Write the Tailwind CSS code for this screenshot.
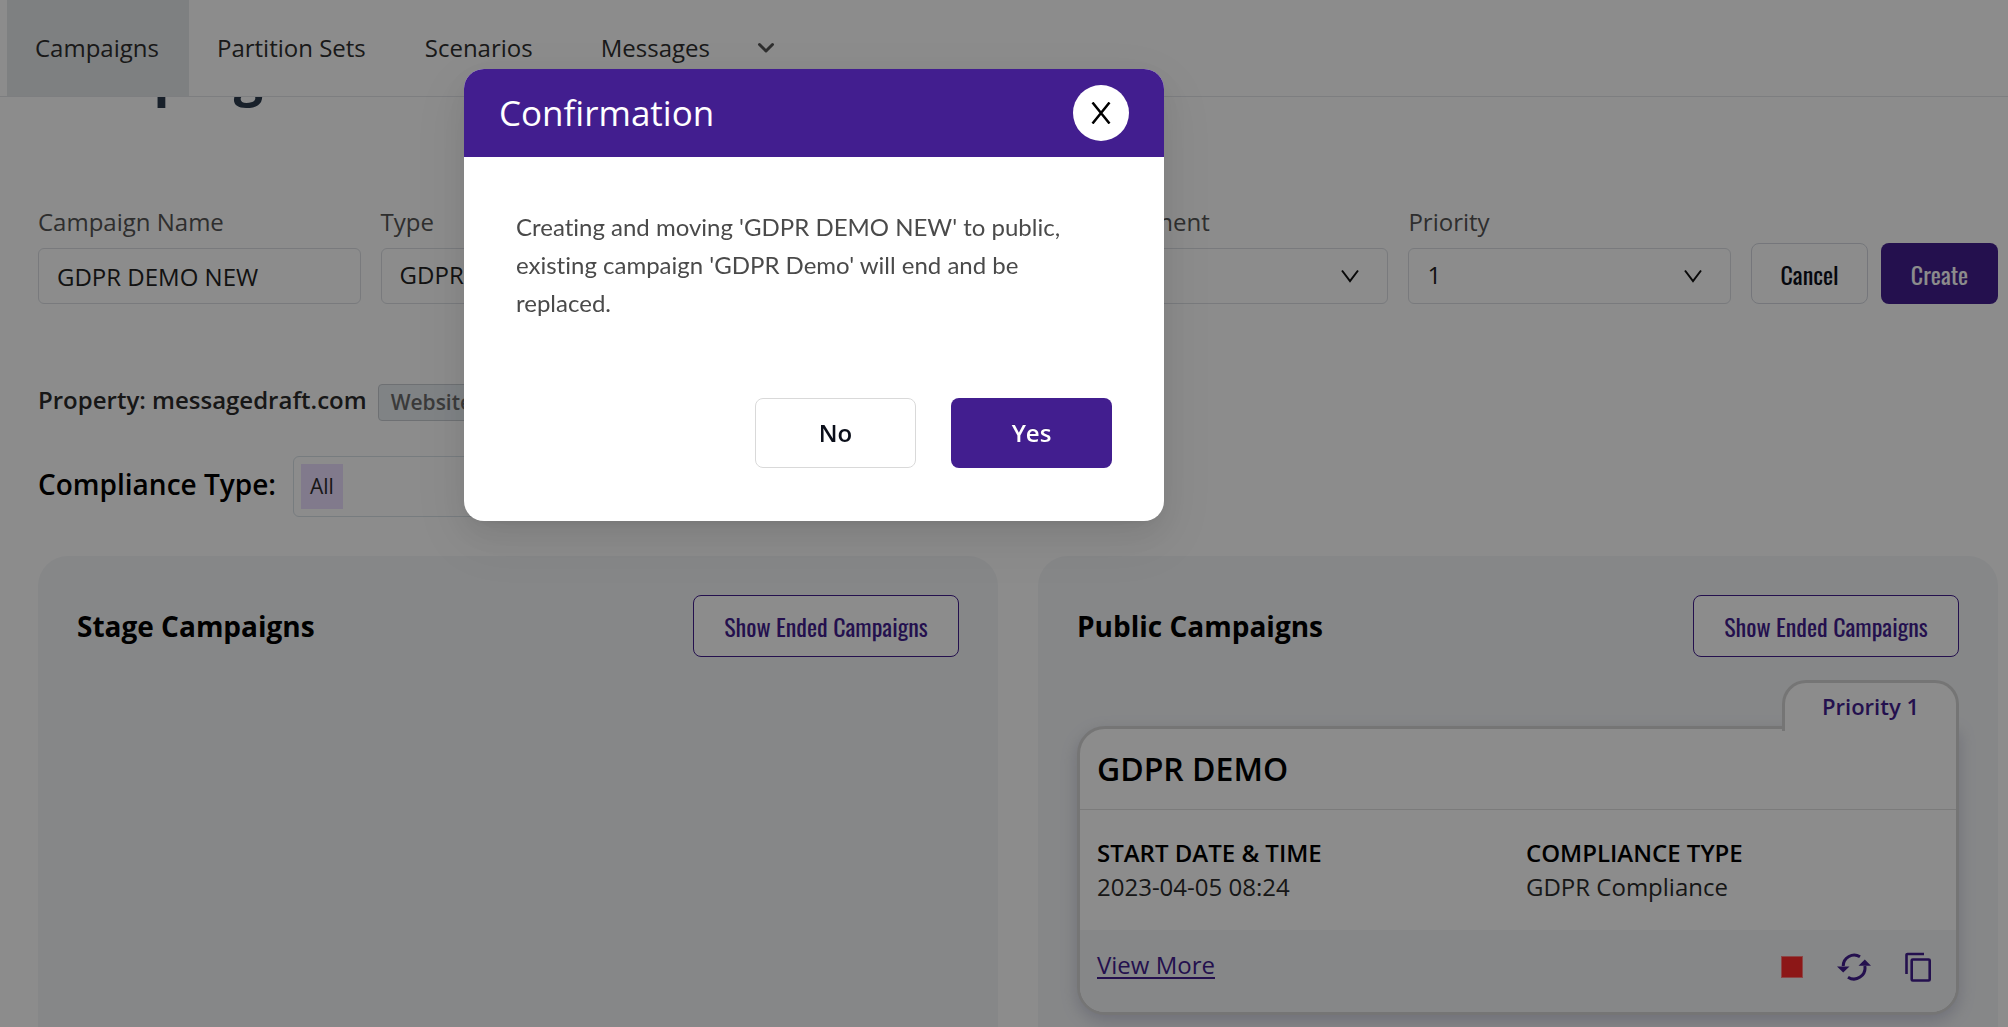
<!DOCTYPE html>
<html lang="en">
<head>
  <meta charset="UTF-8" />
  <meta name="viewport" content="width=device-width, initial-scale=1.0">
  <title>Campaigns</title>
  <script src="https://cdn.jsdelivr.net/npm/@tailwindcss/browser@4"></script>
</head>
<body class="h-screen overflow-hidden bg-white font-['Open_Sans',sans-serif] text-2xl text-black/90">

  <!-- Navigation -->
  <header class="relative z-10 bg-white border-b border-[#e4e6ea]">
    <nav class="flex h-24 pl-[7px] text-[#2f2f2f]">
      <a href="#campaigns" class="flex items-center pl-7 pr-[30px] bg-[#e6e9eb]">Campaigns</a>
      <a href="#partition-sets" class="flex items-center pl-7 pr-[30px]">Partition Sets</a>
      <a href="#scenarios" class="flex items-center pl-[29px] pr-[30px]">Scenarios</a>
      <button type="button" class="flex items-center gap-[46px] px-[38px]">
        Messages
        <svg class="w-5 h-5" viewBox="0 0 20 20" fill="none" stroke="#555" stroke-width="3" stroke-linecap="round" stroke-linejoin="round"><path d="M3.500 6.500 10 13l6.500-6.500" /></svg>
      </button>
    </nav>
  </header>

  <main class="pl-[38px] pr-[10px]">
    <h1 class="-mt-[52px] text-[52px] leading-[60px] font-bold text-[#2c3b4e]">Campaigns</h1>

    <!-- Campaign form -->
    <form class="flex items-end gap-5 mt-[101px]">
      <div class="grid grid-cols-5 gap-5 flex-1 text-[#555]">
        <div>
          <label for="name" class="block leading-8 mb-[10px]">Campaign Name</label>
          <input type="text" id="name" value="GDPR DEMO NEW" class="w-full h-14 px-[18px] border border-[#dcdfe4] rounded-md text-[#222]" />
        </div>
        <div>
          <label for="type" class="block leading-8 mb-[10px]">Type</label>
          <div class="relative">
            <select id="type" class="appearance-none w-full h-14 px-[18px] pb-[3px] border border-[#dcdfe4] rounded-md text-[#222]">
              <option>GDPR</option>
            </select>
            <svg class="absolute right-7 top-[18px] w-5 h-5 pointer-events-none" viewBox="0 0 20 20" fill="none" stroke="#111" stroke-width="2"><path d="M2 4.500 10 15l8-10.500" /></svg>
          </div>
        </div>
        <div>
          <label for="message" class="block leading-8 mb-[10px]">Message</label>
          <div class="relative">
            <select id="message" class="appearance-none w-full h-14 px-[18px] pb-[3px] border border-[#dcdfe4] rounded-md text-[#222]">
              <option>GDPR</option>
            </select>
            <svg class="absolute right-7 top-[18px] w-5 h-5 pointer-events-none" viewBox="0 0 20 20" fill="none" stroke="#111" stroke-width="2"><path d="M2 4.500 10 15l8-10.500" /></svg>
          </div>
        </div>
        <div>
          <label for="environment" class="block leading-8 mb-[10px]">Environment</label>
          <div class="relative">
            <select id="environment" class="appearance-none w-full h-14 px-[18px] pb-[3px] border border-[#dcdfe4] rounded-md text-[#222]">
              <option>Public</option>
            </select>
            <svg class="absolute right-7 top-[18px] w-5 h-5 pointer-events-none" viewBox="0 0 20 20" fill="none" stroke="#111" stroke-width="2"><path d="M2 4.500 10 15l8-10.500" /></svg>
          </div>
        </div>
        <div>
          <label for="priority" class="block leading-8 mb-[10px]">Priority</label>
          <div class="relative">
            <select id="priority" class="appearance-none w-full h-14 px-[18px] pb-[3px] border border-[#dcdfe4] rounded-md text-[#222]">
              <option>1</option>
            </select>
            <svg class="absolute right-7 top-[18px] w-5 h-5 pointer-events-none" viewBox="0 0 20 20" fill="none" stroke="#111" stroke-width="2"><path d="M2 4.500 10 15l8-10.500" /></svg>
          </div>
        </div>
      </div>
      <div class="flex gap-[13px] font-['Oswald','Roboto_Condensed',sans-serif]">
        <button type="button" class="w-[117px] h-[61px] border border-[#d5d8e0] rounded-lg text-[#0b0f1a]">Cancel</button>
        <button type="submit" class="w-[117px] h-[61px] rounded-lg bg-[#421e8f] text-white">Create</button>
      </div>
    </form>

    <!-- Property and filter -->
    <div class="flex items-start gap-[11px] mt-20 font-semibold text-[#2b2b2b]">
      <span class="leading-8">Property: messagedraft.com</span>
      <span class="h-[37px] px-3 border border-[#c8cdd2] rounded-sm bg-[#e9eff3] text-[21px] leading-[35px] text-[#6b6b6b]">Website</span>
    </div>
    <div class="flex items-start gap-[17px] mt-[35px]">
      <span class="text-[28px] leading-14 font-semibold text-black">Compliance Type:</span>
      <div class="flex w-[500px] h-[61px] p-[7px] border border-[#d9e2e8] rounded-md">
        <span class="px-[9px] bg-[#ebdeff] text-[21px] leading-[45px] text-[#2b2b2b]">All</span>
      </div>
    </div>

    <!-- Campaign columns -->
    <div class="grid grid-cols-2 gap-10 mt-[39px]">
      <section class="min-h-[520px] p-[39px] rounded-[30px] bg-[#f4f6f8]">
        <div class="flex items-center justify-between">
          <h2 class="pt-[2px] text-[28px] font-bold text-black">Stage Campaigns</h2>
          <button type="button" class="w-[266px] h-[62px] border border-[#421e8f] rounded-lg bg-white text-[#421e8f] font-['Oswald','Roboto_Condensed',sans-serif]">Show Ended Campaigns</button>
        </div>
      </section>

      <section class="min-h-[520px] p-[39px] rounded-[30px] bg-[#f4f6f8]">
        <div class="flex items-center justify-between">
          <h2 class="pt-[2px] text-[28px] font-bold text-black">Public Campaigns</h2>
          <button type="button" class="w-[266px] h-[62px] border border-[#421e8f] rounded-lg bg-white text-[#421e8f] font-['Oswald','Roboto_Condensed',sans-serif]">Show Ended Campaigns</button>
        </div>

        <div class="mt-[23px]">
          <div class="relative z-[1] flex justify-center w-[177px] h-[51px] pt-[7px] -mb-[5px] ml-auto border-[3px] border-b-0 border-[#d6d6d6] rounded-t-3xl bg-white text-[22px] leading-8 font-semibold text-[#421e8f]">Priority 1</div>
          <article class="overflow-hidden border-[3px] border-[#d6d6d6] rounded-[28px] rounded-tr-none bg-white shadow-[0_6px_16px_rgba(80,80,130,0.25)]">
            <div class="flex items-center h-[81px] px-[17px] border-b border-[#e0e0e0]">
              <h3 class="text-[32px] font-semibold text-black">GDPR DEMO</h3>
            </div>
            <dl class="grid grid-cols-2 gap-4 px-[17px] py-[26px] leading-[34px]">
              <div>
                <dt class="font-semibold text-black">START DATE &amp; TIME</dt>
                <dd class="text-[#2b2b2b]">2023-04-05 08:24</dd>
              </div>
              <div>
                <dt class="font-semibold text-black">COMPLIANCE TYPE</dt>
                <dd class="text-[#2b2b2b]">GDPR Compliance</dd>
              </div>
            </dl>
            <div class="flex items-center justify-between px-[17px] pt-5 pb-8 bg-[#f4f6f8] text-[#421e8f]">
              <a href="#view-more" class="leading-[30px] underline decoration-2 underline-offset-3">View More</a>
              <div class="flex items-center gap-[34px] pt-[2px] pr-2 -mb-[2px]">
                <button type="button" aria-label="Stop" class="w-[22px] h-[22px] border border-[#ff8080] bg-[#ff2a2a]"></button>
                <button type="button" aria-label="Restart">
                  <svg class="w-[34px] h-[28px]" viewBox="0 0 34 28" fill="none" stroke="currentColor" stroke-width="3">
                    <path d="M23 3.800A11 11 0 0 0 6.200 13" />
                    <path d="M11 24.200A11 11 0 0 0 27.800 13" />
                    <path d="M0 13.500h12.500L6.200 19.500zM21.500 12.800H34L27.800 6.500z" fill="currentColor" stroke="none" />
                  </svg>
                </button>
                <button type="button" aria-label="Copy">
                  <svg class="w-[26px] h-[30px]" viewBox="0 0 26 30" fill="none" stroke="currentColor" stroke-width="2.600" stroke-linejoin="round">
                    <rect x="6.700" y="7.500" width="18" height="21" rx="1" />
                    <path d="M1.500 22V3a1 1 0 0 1 1-1h16.500" />
                  </svg>
                </button>
              </div>
            </div>
          </article>
        </div>
      </section>
    </div>
  </main>

  <!-- Confirmation modal -->
  <div class="fixed inset-0 z-20 flex items-start pt-[69px] bg-black/45">
    <div role="dialog" aria-modal="true" aria-labelledby="modalTitle" class="w-[700px] ml-[464px] overflow-hidden rounded-[20px] bg-white shadow-[0_6px_12px_-8px_rgba(0,0,0,0.12),0_12px_32px_rgba(0,0,0,0.08),0_18px_56px_16px_rgba(0,0,0,0.05)]">
      <div class="flex items-center justify-between h-[88px] px-[35px] bg-[#421e8f]">
        <h2 id="modalTitle" class="text-[35px] font-medium text-white">Confirmation</h2>
        <button type="button" aria-label="Close" class="flex items-center justify-center w-14 h-14 rounded-full bg-white">
          <svg class="w-[22px] h-[22px]" viewBox="0 0 22 22" fill="none" stroke="#000" stroke-width="2.500"><path d="M2.500.500l17 21M19.500.500l-17 21" /></svg>
        </button>
      </div>
      <div class="px-[52px] pt-[51px] pb-[53px]">
        <p class="font-['Lato',sans-serif] [font-variant-ligatures:none] leading-[38px] text-[#4a4a4a]">Creating and moving 'GDPR DEMO NEW' to public, existing campaign 'GDPR Demo' will end and be replaced.</p>
        <div class="flex justify-end gap-[35px] mt-[76px] font-semibold">
          <button type="button" class="w-[161px] h-[70px] border border-[#d9d9d9] rounded-lg text-[#0b0f1a]">No</button>
          <button type="button" class="w-[161px] h-[70px] rounded-lg bg-[#421e8f] text-white [text-shadow:0_-1px_0_rgba(0,0,0,0.12)]">Yes</button>
        </div>
      </div>
    </div>
  </div>
</body>
</html>
